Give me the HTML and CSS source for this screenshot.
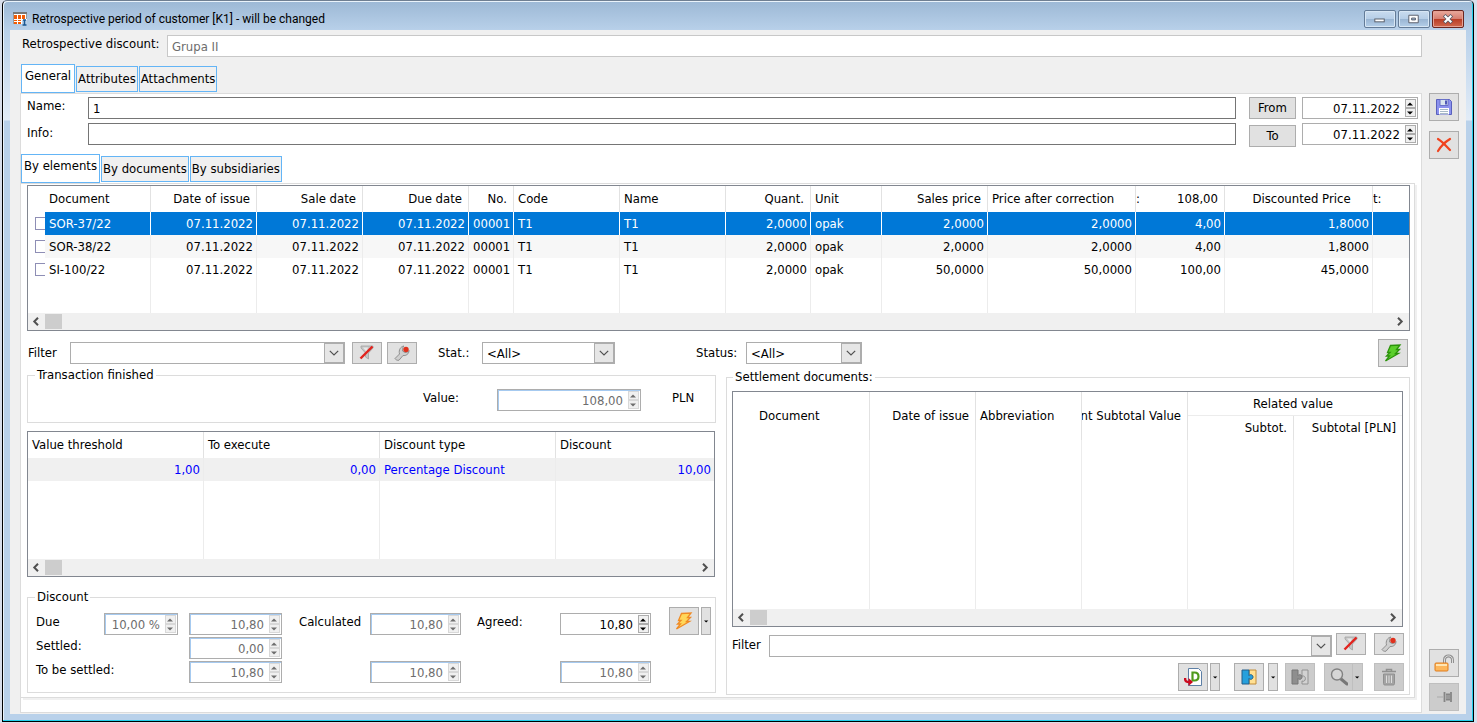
FILE: index.html
```html
<!DOCTYPE html>
<html lang="en">
<head>
<meta charset="utf-8">
<title>Retrospective period of customer [K1] - will be changed</title>
<link rel="stylesheet" href="styles.css">
</head>
<body>
<svg class="defs" aria-hidden="true">
  <symbol id="chev" viewBox="0 0 10 6"><path d="M.8.8 5 5 9.2.8" fill="none" stroke="#505050" stroke-width="1.2"/></symbol>
  <symbol id="up" viewBox="0 0 7 4"><path d="M0 3.500h6L3 .5z" fill="currentColor"/></symbol>
  <symbol id="down" viewBox="0 0 7 4"><path d="M0 .5h6L3 3.500z" fill="currentColor"/></symbol>
  <symbol id="left" viewBox="0 0 8 9"><path d="M6 .8 2.300 4.500 6 8.200" fill="none" stroke="#505050" stroke-width="2"/></symbol>
  <symbol id="right" viewBox="0 0 8 9"><path d="M2 .8 5.700 4.500 2 8.200" fill="none" stroke="#505050" stroke-width="2"/></symbol>
  <symbol id="funnel" viewBox="0 0 16 16"><path d="M2 1h12v2L9.500 8v6l-3-2V8L2 3z" fill="#c4c4c4" stroke="#a2a2a2" stroke-width=".8"/><path d="M4 2.500h5L7.500 7z" fill="#e8e8e8"/><path d="M1.500 13.500 13.500 1.500" stroke="#e2231d" stroke-width="2.400"/></symbol>
  <symbol id="wrench" viewBox="0 0 16 16"><path d="M1 13.500 5.500 9C4.500 5 6.500 1.500 10 1l-1 1.200L8.500 6 11 7.500l3-.7 1-1.300c0 3.500-3 5.500-6 5L5 15.200c-1.500.5-3.500-.5-4-1.700z" fill="#cfcfcf" stroke="#8f8f8f"/><circle cx="12" cy="4.500" r="2.700" fill="#e0301c"/></symbol>
  <symbol id="bolt" viewBox="0 0 18 18"><path d="M6.500 1.500 16 1l-3.500 4.500H15.500L11.500 9.500h3L1.500 17 5.500 12H2.500L6 8.500H3.500z" stroke-width="1.300"/></symbol>
</svg>
<main class="window">
  <header class="titlebar">
    <svg class="appicon" viewBox="0 0 14 14"><path d="M0 0h14v12H0z" fill="#fff"/><path d="M0 0h14v2H0z" fill="#777"/><path d="M0 2h1v10H0zM13 2h1v5h-1z" fill="#999"/><path d="M1 3h3v4H1zM5 3h3v4H5zM9 3h3v4H9zM1 8h3v1H1zM5 8h3v1H5zM1 10h3v2H1zM5 10h3v2H5z" fill="#f25c05"/><path d="M9 8h5v6H9z" fill="#b9d1ea"/><path d="M10 8h3M11.500 8v5M9.500 13h4" stroke="#1b5790" stroke-width="1.500"/></svg>
    <h1>Retrospective period of customer [K1] - will be changed</h1>
    <div class="winbtns">
      <button type="button" aria-label="Minimize"><svg viewBox="0 0 30 17"><rect x="9.500" y="8.500" width="10" height="3" fill="#fff" stroke="#555b66"/></svg></button>
      <button type="button" aria-label="Restore"><svg viewBox="0 0 30 17"><path d="M9.500 4.500h10v8h-10zM12.500 7.500v2h4v-2z" fill="#fff" fill-rule="evenodd" stroke="#555b66"/></svg></button>
      <button type="button" class="close" aria-label="Close"><svg viewBox="0 0 30 17"><path d="m11 4.500 8 8m0-8-8 8" stroke="#5a5a66" stroke-width="4"/><path d="m11.500 5 7 7m0-7-7 7" stroke="#fff" stroke-width="2.200"/></svg></button>
    </div>
  </header>
  <div class="client">
    <div class="main">
      <div class="toprow">
        <label for="rd">Retrospective discount:</label>
        <input id="rd" class="text muted" value="Grupa II" readonly>
      </div>
      <nav class="tabs"><button type="button" class="on">General</button><button type="button">Attributes</button><button type="button">Attachments</button></nav>
      <section class="panel">
        <div class="fields">
          <div class="labels"><label for="nm">Name:</label><label for="inf">Info:</label></div>
          <div class="stack grow"><input id="nm" class="text dark" value="1"><input id="inf" class="text dark" value=""></div>
          <div class="fromto"><button type="button" class="btn">From</button><button type="button" class="btn">To</button></div>
          <div class="stack dates">
            <div class="spin"><input aria-label="From date" value="07.11.2022"><span class="arrows"><button type="button" aria-label="Up"><svg><use href="#up"/></svg></button><button type="button" aria-label="Down"><svg><use href="#down"/></svg></button></span></div>
            <div class="spin"><input aria-label="To date" value="07.11.2022"><span class="arrows"><button type="button" aria-label="Up"><svg><use href="#up"/></svg></button><button type="button" aria-label="Down"><svg><use href="#down"/></svg></button></span></div>
          </div>
        </div>
        <nav class="tabs second"><button type="button" class="on">By elements</button><button type="button">By documents</button><button type="button">By subsidiaries</button></nav>
        <section class="inner">
          <div class="gridbox">
            <table>
              <colgroup><col class="c17"><col class="c106"><col class="c106"><col class="c106"><col class="c106"><col class="c45"><col class="c106"><col class="c106"><col class="c85"><col class="c71"><col class="c106"><col class="c148"><col class="c89"><col class="c148"><col></colgroup>
              <thead><tr><th class="ck"></th><th>Document</th><th class="r">Date of issue</th><th class="r">Sale date</th><th class="r">Due date</th><th class="r">No.</th><th>Code</th><th>Name</th><th class="r">Quant.</th><th>Unit</th><th class="r">Sales price</th><th>Price after correction</th><th class="sum"><div><span>:</span><span>108,00</span></div></th><th class="mid">Discounted Price</th><th class="cut">t:</th></tr></thead>
              <tbody>
                <tr class="sel"><td class="ck"><input type="checkbox" aria-label="SOR-37/22"></td><td>SOR-37/22</td><td class="r">07.11.2022</td><td class="r">07.11.2022</td><td class="r">07.11.2022</td><td class="r">00001</td><td>T1</td><td>T1</td><td class="r">2,0000</td><td>opak</td><td class="r">2,0000</td><td class="r">2,0000</td><td class="r">4,00</td><td class="r">1,8000</td><td></td></tr>
                <tr class="alt"><td class="ck"><input type="checkbox" aria-label="SOR-38/22"></td><td>SOR-38/22</td><td class="r">07.11.2022</td><td class="r">07.11.2022</td><td class="r">07.11.2022</td><td class="r">00001</td><td>T1</td><td>T1</td><td class="r">2,0000</td><td>opak</td><td class="r">2,0000</td><td class="r">2,0000</td><td class="r">4,00</td><td class="r">1,8000</td><td></td></tr>
                <tr><td class="ck"><input type="checkbox" aria-label="SI-100/22"></td><td>SI-100/22</td><td class="r">07.11.2022</td><td class="r">07.11.2022</td><td class="r">07.11.2022</td><td class="r">00001</td><td>T1</td><td>T1</td><td class="r">2,0000</td><td>opak</td><td class="r">50,0000</td><td class="r">50,0000</td><td class="r">100,00</td><td class="r">45,0000</td><td></td></tr>
                <tr class="fill"><td class="ck"></td><td></td><td></td><td></td><td></td><td></td><td></td><td></td><td></td><td></td><td></td><td></td><td></td><td></td><td></td></tr>
              </tbody>
            </table>
            <div class="hbar"><svg><use href="#left"/></svg><i></i><svg><use href="#right"/></svg></div>
          </div>
          <div class="filters">
            <label for="f1" class="l-filter">Filter</label>
            <span class="combo w275"><select id="f1"><option></option></select><b><svg><use href="#chev"/></svg></b></span>
            <button type="button" class="btn ib" aria-label="Clear filter"><svg class="i16"><use href="#funnel"/></svg></button>
            <button type="button" class="btn ib wr" aria-label="Filter settings"><svg class="i16"><use href="#wrench"/></svg></button>
            <label for="f2" class="l-stat">Stat.:</label>
            <span class="combo w133"><select id="f2"><option>&lt;All&gt;</option></select><b><svg><use href="#chev"/></svg></b></span>
            <label for="f3" class="l-status">Status:</label>
            <span class="combo w116"><select id="f3"><option>&lt;All&gt;</option></select><b><svg><use href="#chev"/></svg></b></span>
            <button type="button" class="btn tall end" aria-label="Recalculate"><svg class="i18 green"><use href="#bolt"/></svg></button>
          </div>
          <div class="cols">
            <div class="leftcol">
              <fieldset class="fs1"><legend>Transaction finished</legend>
                <div class="valuerow">
                <label for="val">Value:</label>
                <div class="spin dis"><input id="val" value="108,00" readonly><span class="arrows"><button type="button" aria-label="Up"><svg><use href="#up"/></svg></button><button type="button" aria-label="Down"><svg><use href="#down"/></svg></button></span></div>
                <span>PLN</span>
                </div>
              </fieldset>
              <div class="gridbox thresholds">
                <table>
                  <colgroup><col class="c176"><col class="c176"><col class="c176"><col></colgroup>
                  <thead><tr><th>Value threshold</th><th>To execute</th><th>Discount type</th><th>Discount</th></tr></thead>
                  <tbody>
                    <tr class="blue"><td class="r">1,00</td><td class="r">0,00</td><td>Percentage Discount</td><td class="r">10,00</td></tr>
                    <tr class="fill"><td></td><td></td><td></td><td></td></tr>
                  </tbody>
                </table>
                <div class="hbar"><svg><use href="#left"/></svg><i></i><svg><use href="#right"/></svg></div>
              </div>
              <fieldset class="fs2"><legend>Discount</legend>
                <div class="amounts">
                <label class="g1" for="due">Due</label>
                <div class="spin dis g2"><input id="due" value="10,00 %" readonly><span class="arrows"><button type="button" aria-label="Up"><svg><use href="#up"/></svg></button><button type="button" aria-label="Down"><svg><use href="#down"/></svg></button></span></div>
                <div class="spin dis g3"><input aria-label="Due value" value="10,80" readonly><span class="arrows"><button type="button" aria-label="Up"><svg><use href="#up"/></svg></button><button type="button" aria-label="Down"><svg><use href="#down"/></svg></button></span></div>
                <label class="g4" for="calc">Calculated</label>
                <div class="spin dis g5"><input id="calc" value="10,80" readonly><span class="arrows"><button type="button" aria-label="Up"><svg><use href="#up"/></svg></button><button type="button" aria-label="Down"><svg><use href="#down"/></svg></button></span></div>
                <label class="g6" for="agr">Agreed:</label>
                <div class="spin g7"><input id="agr" value="10,80"><span class="arrows"><button type="button" aria-label="Up"><svg><use href="#up"/></svg></button><button type="button" aria-label="Down"><svg><use href="#down"/></svg></button></span></div>
                <div class="g8 split"><button type="button" class="btn tall" aria-label="Calculate"><svg class="i18 orange"><use href="#bolt"/></svg></button><button type="button" class="btn drop" aria-label="More"><svg><use href="#down"/></svg></button></div>
                <label class="g1 r2" for="set">Settled:</label>
                <div class="spin dis g3 r2"><input id="set" value="0,00" readonly><span class="arrows"><button type="button" aria-label="Up"><svg><use href="#up"/></svg></button><button type="button" aria-label="Down"><svg><use href="#down"/></svg></button></span></div>
                <label class="g1 r3" for="tbs">To be settled:</label>
                <div class="spin dis g3 r3"><input id="tbs" value="10,80" readonly><span class="arrows"><button type="button" aria-label="Up"><svg><use href="#up"/></svg></button><button type="button" aria-label="Down"><svg><use href="#down"/></svg></button></span></div>
                <div class="spin dis g5 r3"><input aria-label="Calculated to be settled" value="10,80" readonly><span class="arrows"><button type="button" aria-label="Up"><svg><use href="#up"/></svg></button><button type="button" aria-label="Down"><svg><use href="#down"/></svg></button></span></div>
                <div class="spin dis g7 r3"><input aria-label="Agreed to be settled" value="10,80" readonly><span class="arrows"><button type="button" aria-label="Up"><svg><use href="#up"/></svg></button><button type="button" aria-label="Down"><svg><use href="#down"/></svg></button></span></div>
                </div>
              </fieldset>
            </div>
            <fieldset class="settle"><legend>Settlement documents:</legend>
              <div class="settlebody">
              <div class="gridbox">
                <table>
                  <colgroup><col class="c137"><col class="c106"><col class="c106"><col class="c106"><col class="c106"><col></colgroup>
                  <thead>
                    <tr class="h24"><th rowspan="2" class="indent">Document</th><th rowspan="2" class="r">Date of issue</th><th rowspan="2">Abbreviation</th><th rowspan="2" class="clip"><div>nt Subtotal Value</div></th><th colspan="2" class="mid rel">Related value</th></tr>
                    <tr class="h24"><th class="r">Subtot.</th><th class="r">Subtotal [PLN]</th></tr>
                  </thead>
                  <tbody><tr class="fill"><td></td><td></td><td></td><td></td><td></td><td></td></tr></tbody>
                </table>
                <div class="hbar"><svg><use href="#left"/></svg><i></i><svg><use href="#right"/></svg></div>
              </div>
              <div class="sfilter">
                <label for="f4">Filter</label>
                <span class="combo grow"><select id="f4"><option></option></select><b><svg><use href="#chev"/></svg></b></span>
                <button type="button" class="btn ib" aria-label="Clear filter"><svg class="i16"><use href="#funnel"/></svg></button>
                <button type="button" class="btn ib" aria-label="Filter settings"><svg class="i16"><use href="#wrench"/></svg></button>
              </div>
              <div class="actions">
                <div class="split"><button type="button" class="btn tall" aria-label="Add document"><svg class="i18" viewBox="0 0 18 18"><path d="M4.500.5h10l3 3v14h-13z" fill="#fff" stroke="#5d7fa5"/><path d="M8.500 4.500h2c3 0 4 2 4 4s-1 4-4 4h-2z" fill="none" stroke="#4f9a1c" stroke-width="2.200"/><path d="M1 10c0 3 1 4 4 4" fill="none" stroke="#cc0a1e" stroke-width="2.500"/><path d="M4.500 10v8L9 14z" fill="#cc0a1e"/></svg></button><button type="button" class="btn drop" aria-label="More"><svg><use href="#down"/></svg></button></div>
                <div class="split wide"><button type="button" class="btn tall" aria-label="Link"><svg class="i16" viewBox="0 0 16 16"><path d="M8 1h7v14H8z" fill="#ffe093" stroke="#c08c38"/><path d="M1 1h7v5.500c1-1.500 4-1 4 1.500s-3 3-4 1.500V15H1z" fill="#26a0dc" stroke="#235d88"/></svg></button><button type="button" class="btn drop" aria-label="More"><svg><use href="#down"/></svg></button></div>
                <button type="button" class="btn tall off" aria-label="Unlink"><svg class="i18" viewBox="0 0 18 16"><path d="M11 1h6v14h-6v-3c4 2 5-6 0-5z" fill="#d2d2d2" stroke="#929292"/><path d="M1 1h6v5.500c1-1.500 4-1 4 1.500s-3 3-4 1.500V15H1z" fill="#8e8e8e" stroke="#777"/></svg></button>
                <button type="button" class="btn tall off look" aria-label="View"><svg class="i18" viewBox="0 0 18 18"><path d="m11 11 6 5" stroke="#777" stroke-width="3" stroke-linecap="round"/><circle cx="7" cy="6.500" r="5.500" fill="#d6d6d6" stroke="#828282" stroke-width="1.400"/></svg><span><svg class="tri"><use href="#down"/></svg></span></button>
                <button type="button" class="btn tall off" aria-label="Delete"><svg class="i18" viewBox="0 0 18 18"><path d="M2 3.500h14M6.500 3V1.500h5V3" fill="none" stroke="#909090" stroke-width="1.500"/><path d="M3.500 6h11v9.500c0 1-.5 1.500-1.500 1.500H5c-1 0-1.500-.5-1.500-1.500z" fill="#a3a3a3" stroke="#909090"/><path d="M6.500 7.500v7.500M9 7.500v7.500M11.500 7.500v7.500" stroke="#ddd"/></svg></button>
              </div>
              </div>
            </fieldset>
          </div>
        </section>
      </section>
    </div>
    <aside class="side">
      <button type="button" class="btn tall" aria-label="Save"><svg class="i16" viewBox="0 0 16 16"><path d="M.5.5h13l2 2v13H.5z" fill="#8b91ee" stroke="#5960bd"/><path d="M4 .5h8v6H4z" fill="#d9e5ef" stroke="#6971c8"/><path d="M9 1.500h2v4H9z" fill="#4f58b5"/><path d="M3 9h10v6.500H3z" fill="#fff"/><path d="M4 10.500h8M4 12.500h8M4 14.500h8" stroke="#a7b9c8"/></svg></button>
      <button type="button" class="btn tall" aria-label="Cancel"><svg class="i16" viewBox="0 0 16 16"><path d="M2 2c5 3 8 7 12 11" fill="none" stroke="#f0431f" stroke-width="2.200" stroke-linecap="round"/><path d="M14 2C9 5 5 9 2 14" fill="none" stroke="#f0431f" stroke-width="2.200" stroke-linecap="round"/></svg></button>
      <button type="button" class="btn tall bottom" aria-label="Unlock"><svg class="i20" viewBox="0 0 20 18"><path d="M10.500 10V6c0-5.500 8-5.500 8 0v3" fill="none" stroke="#8f8f8f" stroke-width="3"/><path d="M10.500 10V6c0-5.500 8-5.500 8 0v3" fill="none" stroke="#dedede"/><rect x="1" y="9" width="13" height="8" rx="1" fill="#fdb75c" stroke="#e07c1c"/><path d="M2 11h11" stroke="#ffe5b3" stroke-width="2"/></svg></button>
      <button type="button" class="btn tall off" aria-label="Pin"><svg class="i16" viewBox="0 0 16 16"><path d="M1 8h6" stroke="#aaa"/><path d="M8.500 3v10M10 5.500h4M10 10.500h4M15 3v10" fill="none" stroke="#858585" stroke-width="1.800"/><path d="M10 6h4v4h-4z" fill="#999"/></svg></button>
    </aside>
  </div>
</main>
</body>
</html>
```
FILE: styles.css
```css
* { box-sizing: border-box; }
body {
  margin: 0; height: 100vh; padding: 0 3px 1px 2px;
  background: #d9dfeb;
  font: 13px/16px "DejaVu Sans Condensed", "DejaVu Sans", sans-serif; color: #000;
}
input, button, select { font: inherit; color: inherit; margin: 0; min-width: 0; }
input, select { border-radius: 0; }
.defs { position: absolute; width: 0; height: 0; }
svg { display: block; flex: none; }

.window {
  height: 100%; display: flex; flex-direction: column;
  border: 1px solid #000; border-top-color: #6f7f92; border-radius: 5px 5px 0 0;
  box-shadow: inset -1px -1px 0 #22d0ec, inset 1px 1px 0 #eaf3fb;
  padding: 0 7px 7px 7px;
  background: linear-gradient(#9cb8d5, #b9d1ea 30px, #e2ecf7 119px, #b9d1ea 120px);
}
.titlebar { height: 29px; flex: none; display: flex; align-items: center; padding: 6px 2px 0 3px; }
.appicon { width: 14px; height: 14px; }
.titlebar h1 { margin: 0 auto 0 5px; font: 12px/16px Roboto, "Open Sans", sans-serif; }
.winbtns { display: flex; gap: 2px; }
.winbtns button {
  width: 32px; height: 18px; padding: 0; border: 1px solid #637b97; border-radius: 2px;
  background: linear-gradient(#c9dcef, #b6cee7 48%, #98b4d2 50%, #b4cfe9);
  box-shadow: inset 0 0 0 1px #d7e6f4;
}
.winbtns .close { border-color: #6b2620; background: linear-gradient(#e9a99c, #d77f70 48%, #b93c25 50%, #d0694e); box-shadow: inset 0 0 0 1px #e6a294; }
.winbtns svg { width: 30px; height: 16px; }

.client { flex: 1; min-height: 0; display: flex; background: #f0f0f0; }
.main { flex: 1; min-width: 0; display: flex; flex-direction: column; padding: 5px 0 1px 10px; }
.toprow { display: flex; padding-left: 2px; gap: 5px; }
.toprow label { width: 140px; white-space: nowrap; line-height: 18px; }
.text { height: 22px; flex: 1; padding: 1px 4px 0; background: #fff; border: 1px solid #c8c8c8; }
.muted { color: #6d6d6d; }
.dark { border-color: #757575; }
.stack .text { flex: none; width: 100%; }

.tabs { display: flex; gap: 1px; height: 29px; margin-top: 7px; padding-left: 1px; flex: none; }
.tabs button { height: 26px; margin-top: 2px; padding: 0 1px; border: 1px solid #64b5f6; background: #f0f0f0; white-space: nowrap; }
.tabs .on { height: 29px; margin-top: 0; padding: 0 3px 5px; background: #fff; }
.panel { flex: 1; min-height: 0; display: flex; flex-direction: column; background: #fff; border: 1px solid #dcdcdc; }
.fields { display: flex; padding: 3px 3px 0 6px; }
.labels { width: 61px; display: flex; flex-direction: column; gap: 9px; line-height: 18px; }
.stack { display: flex; flex-direction: column; gap: 4px; }
.grow { flex: 1; min-width: 0; }
.fromto { width: 47px; margin: 0 6px 0 13px; display: flex; flex-direction: column; gap: 6px; }
.btn { height: 22px; padding: 0; border: 1px solid #adadad; background: #e1e1e1; display: flex; align-items: center; justify-content: center; }
.dates { width: 116px; }

.spin { display: flex; height: 22px; border: 1px solid #adadad; background: #fff; padding: 1px; }
.spin input { flex: 1; width: 0; border: 0; background: none; padding: 1px 5px 0 0; text-align: right; outline: 0; }
.arrows { width: 11px; display: flex; flex-direction: column; }
.arrows button { flex: 1; padding: 0; border: 1px solid #adadad; background: #f0f0f0; display: flex; align-items: center; justify-content: center; }
.arrows svg { width: 7px; height: 4px; }
.dis { color: #6d6d6d; box-shadow: inset 1px 1px 0 #a6caf0; }
.dis .arrows button { border-color: #d8d8d8; }

.second { margin: 7px 0 0 -1px; }
.second button { padding: 0 1px; }
.second .on { padding: 0 2px 5px; }
.inner { flex: 1; min-height: 0; display: flex; flex-direction: column; margin: 0 6px 14px 0; padding: 1px 4px 2px 6px; border: 1px solid #dcdcdc; border-left: 0; box-shadow: 2px 2px 0 #f0f0f0; }
.gridbox { border: 1px solid #828790; background: #fff; display: grid; grid-template-rows: 1fr 17px; overflow: hidden; }
table { width: 100%; table-layout: fixed; border-spacing: 0; align-self: stretch; }
th, td { padding: 0 3px 0 4px; border-right: 1px solid #ececec; font-weight: normal; text-align: left; white-space: nowrap; overflow: hidden; height: 23px; }
th { height: 26px; border-color: #e2e2e2; padding-right: 6px; }
tr > :last-child { border-right: 0; }
.fill td { height: 32px; }
.thresholds .fill td, .settle .fill td { height: auto; }
.r { text-align: right; }
.mid { text-align: center; }
th.mid { padding: 0 2px 0 8px; }
th.rel { padding: 0 4px 0 0; }
th.cut { padding: 0; }
.ck { border-right: 0; padding: 0; }
.ck input { appearance: none; display: block; width: 10px; height: 13px; margin-left: 7px; border: 1px solid #8e8eb5; border-right: 0; background: #fff; }
th.sum { padding-left: 0; }
.sum div { display: flex; justify-content: space-between; }
.sel td:not(.ck) { background: #0078d7; color: #fff; border-color: #fff; }
.alt td:not(.ck) { background: #f7f7f7; }
.blue td { background: #f0f0f0; color: #0000ff; }
.clip div { display: flex; justify-content: flex-end; }
th.clip { padding-left: 0; }
.h24 th { height: 24px; }
.rel { border-bottom: 1px solid #ececec; }
th.indent { padding-left: 26px; }
.c17 { width: 17px; } .c45 { width: 45px; } .c71 { width: 71px; } .c85 { width: 85px; } .c89 { width: 89px; }
.c106 { width: 106px; } .c137 { width: 137px; } .c148 { width: 148px; } .c176 { width: 176px; }
.hbar { display: flex; align-items: center; background: #f0f0f0; }
.hbar svg { width: 8px; height: 9px; margin: 0 5px 0 4px; }
.hbar i { width: 17px; height: 15px; margin-right: auto; background: #cdcdcd; }

.filters { display: flex; align-items: center; margin-top: 8px; padding: 0 2px 0 1px; flex: none; }
.l-filter { width: 42px; }
.l-stat { width: 44px; }
.l-status { width: 50px; margin-left: 81px; }
.combo { display: grid; grid-template-columns: 1fr 20px; height: 22px; border: 1px solid #adadad; background: #fff; }
.combo select { grid-area: 1 / 1 / 2 / 3; appearance: none; width: 100%; border: 0; padding: 1px 24px 0 4px; background: none; outline: 0; }
.combo b { grid-area: 1 / 2; border: 1px solid #adadad; background: #e6e6e6; display: flex; align-items: center; justify-content: center; pointer-events: none; }
.combo b svg { width: 10px; height: 6px; }
.w275 { width: 275px; } .w133 { width: 133px; } .w116 { width: 116px; }
.ib { width: 30px; flex: none; margin-left: 7px; }
.wr { margin: 0 21px 0 5px; }
.tall { width: 30px; height: 28px; flex: none; }
.end { margin-left: auto; }
.i16 { width: 16px; height: 16px; } .i18 { width: 18px; height: 18px; } .i20 { width: 20px; height: 18px; }
.green { fill: #5bcf2b; stroke: #2c930b; }
.orange { fill: #ffd75a; stroke: #f08a24; }

.cols { flex: 1; min-height: 0; display: grid; grid-template-columns: 689fr 684fr; gap: 10px; }
.leftcol { display: flex; flex-direction: column; min-width: 0; padding-bottom: 2px; }
fieldset { margin: 0; min-width: 0; border: 1px solid #dcdcdc; padding: 0; }
legend { margin-left: 7px; padding: 0 2px; }
.fs1 { height: 56px; flex: none; }
.valuerow { display: flex; padding: 6px 0 0 395px; line-height: 18px; }
.fs1 label { width: 74px; }
.fs1 .spin { width: 144px; margin-right: 31px; }
.thresholds { flex: 1; margin: 8px 1px 12px 0; min-height: 0; }
.fs2 { height: 104px; flex: none; }
.amounts { display: grid; grid-template-columns: 68px 85px 110px 71px 107px 83px 109px 42px; grid-template-rows: 22px 22px 22px; row-gap: 2px; padding: 8px 0 0 8px; line-height: 18px; }
.g1 { grid-column: 1 / 3; grid-row: 1; } .g2 { grid-column: 2; width: 74px; grid-row: 1; } .g3 { grid-column: 3; width: 93px; grid-row: 1; }
.g4 { grid-column: 4; grid-row: 1; } .g5 { grid-column: 5; width: 91px; grid-row: 1; } .g6 { grid-column: 6; grid-row: 1; } .g7 { grid-column: 7; width: 91px; grid-row: 1; }
.g8 { grid-column: 8; grid-row: 1; margin-top: -6px; }
.r2 { grid-row: 2; } .r3 { grid-row: 3; }
.split { display: flex; gap: 2px; height: 28px; }
.drop { width: 10px; height: 28px; }
.drop svg, .tri { width: 5px; height: 3px; }

.settle { margin-top: 2px; padding: 6px 6px 3px 5px; }
.settle legend { margin-left: 1px; }
.settlebody { height: 100%; display: flex; flex-direction: column; }
.settle .gridbox { flex: 1; min-height: 0; }
.sfilter { display: flex; align-items: flex-end; height: 24px; margin-top: 6px; margin-right: -1px; }
.sfilter label { width: 37px; align-self: center; }
.sfilter .ib { margin-left: 4px; align-self: flex-start; }
.sfilter .ib:last-child { margin-left: 8px; }
.actions { display: flex; justify-content: flex-end; margin: 6px -1px 0 0; }
.actions .split { margin-right: 14px; }
.actions .wide { gap: 4px; margin-right: 7px; }
.actions .off { margin-right: 9px; }
.actions .look { margin-right: 11px; }
.actions .off:last-child { margin-right: 0; }
.off { background: #ccc; border-color: #bfbfbf; }
.actions .look { width: 39px; justify-content: space-between; padding-left: 5px; }
.look span { width: 10px; height: 100%; border-left: 1px solid #bfbfbf; display: flex; align-items: center; justify-content: center; }

.side { width: 44px; flex: none; padding: 63px 7px 3px 7px; display: flex; flex-direction: column; gap: 10px; }
.side .bottom { margin-top: auto; }
.side .bottom + .btn { margin-top: -4px; }
```
